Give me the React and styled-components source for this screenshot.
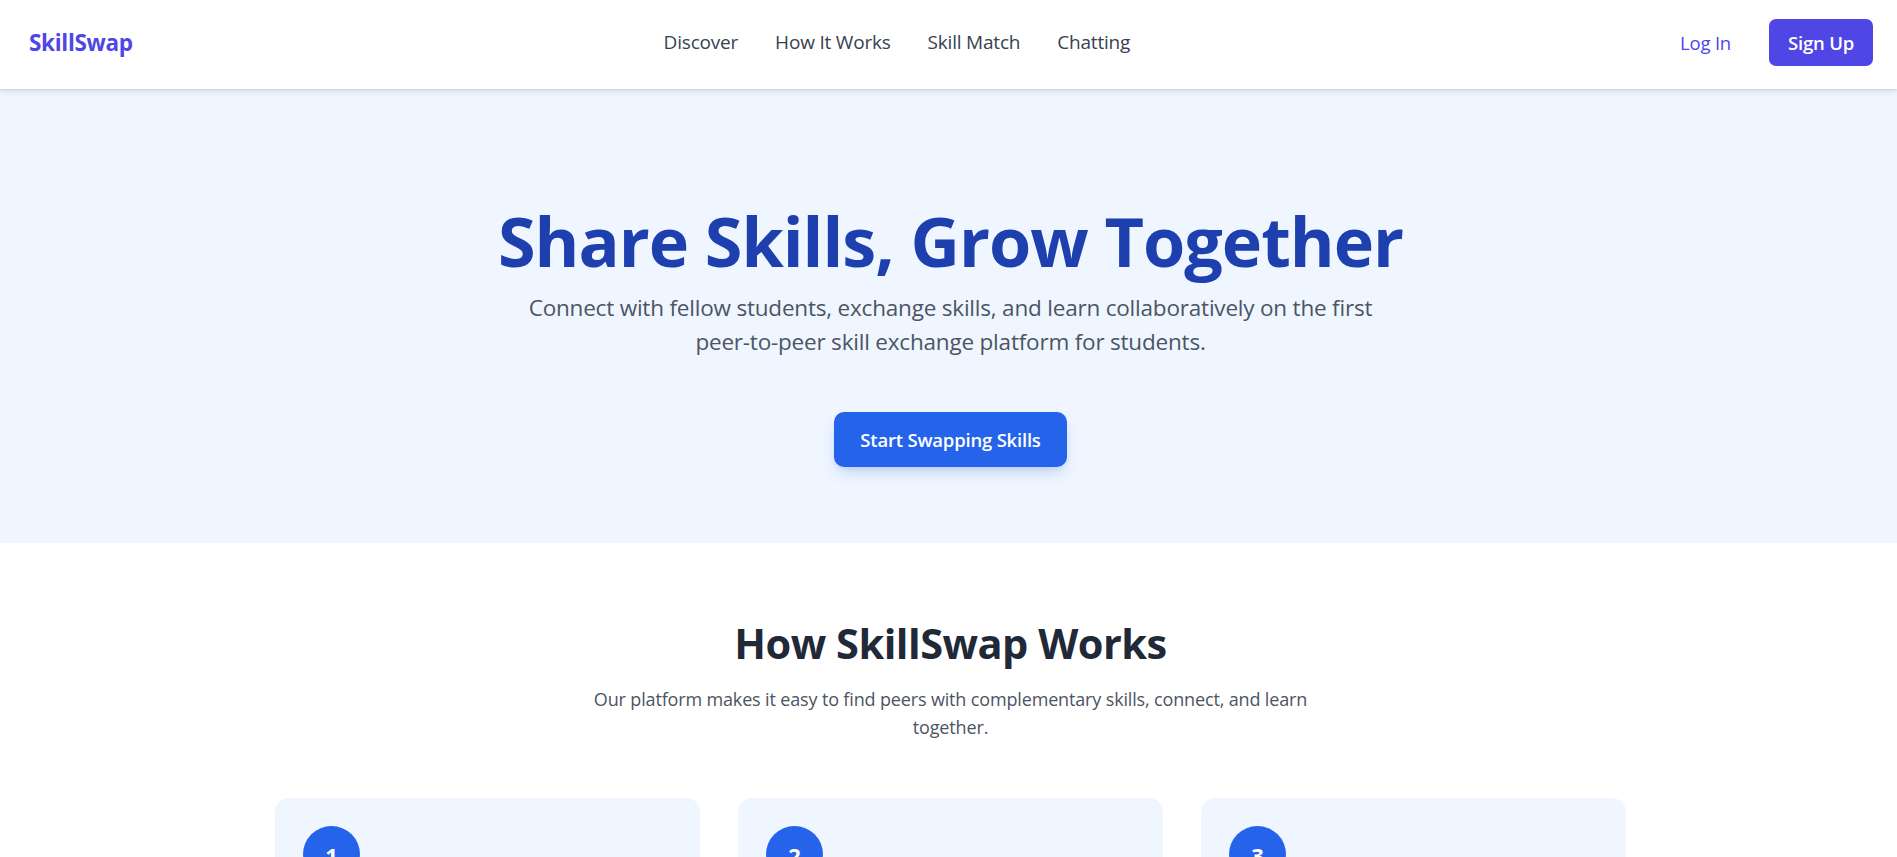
import React from "react";
import styled, { createGlobalStyle } from "styled-components";

const GlobalStyle = createGlobalStyle`
  html {
    scrollbar-width: none;
  }
  html::-webkit-scrollbar {
    display: none;
  }
  body {
    margin: 0;
    font-family: "Open Sans", "Noto Sans", sans-serif;
    color: #1f2937;
    background: #ffffff;
  }
  * {
    box-sizing: border-box;
  }
`;

const Header = styled.header`
  position: relative;
  z-index: 2;
  height: 89px;
  padding: 0 24px 5px 29px;
  display: flex;
  align-items: center;
  justify-content: space-between;
  background: #ffffff;
  box-shadow: 0 2px 6px rgba(15, 23, 42, 0.12), 0 1px 2px rgba(15, 23, 42, 0.06);
`;

const Logo = styled.a`
  font-size: 22.5px;
  font-weight: 700;
  color: #4f46e5;
  text-decoration: none;
  letter-spacing: -0.3px;
`;

const Nav = styled.nav`
  display: flex;
  gap: 37px;
`;

const NavLink = styled.a`
  font-size: 19px;
  font-weight: 500;
  color: #374151;
  text-decoration: none;
  letter-spacing: -0.2px;
`;

const Actions = styled.div`
  display: flex;
  align-items: center;
  gap: 19px;
`;

const Button = styled.button`
  font-family: inherit;
  border: none;
  cursor: pointer;
  font-size: 18.5px;
  font-weight: ${(p) => (p.$variant === "ghost" ? 500 : 600)};
  color: ${(p) => (p.$variant === "ghost" ? "#4f46e5" : "#ffffff")};
  background: ${(p) =>
    p.$variant === "ghost" ? "transparent" : p.$variant === "blue" ? "#2563eb" : "#4f46e5"};
  border-radius: ${(p) => (p.$size === "lg" ? "10px" : "7px")};
  height: ${(p) => (p.$size === "lg" ? "55px" : "47px")};
  padding: ${(p) => (p.$size === "lg" ? "0 26px" : "0 19px")};
  box-shadow: ${(p) =>
    p.$size === "lg"
      ? "0 8px 16px -4px rgba(37, 99, 235, 0.25), 0 4px 8px -4px rgba(15,23,42,0.1)"
      : "none"};
  letter-spacing: -0.2px;
`;

const Hero = styled.section`
  background: #eff6ff;
  padding: 114px 22px 76px 26px;
  display: flex;
  flex-direction: column;
  align-items: center;
  text-align: center;
`;

const HeroTitle = styled.h1`
  margin: 0;
  font-size: 68.3px;
  line-height: 1.1;
  font-weight: 700;
  color: #1e40af;
  letter-spacing: -1px;
`;

const HeroText = styled.p`
  margin: 13px 0 0;
  max-width: 870px;
  font-size: 22.5px;
  line-height: 34px;
  color: #4b5563;
  letter-spacing: -0.2px;
`;

const HeroAction = styled.div`
  margin-top: 53px;
`;

const Works = styled.section`
  padding: 76px 22px 80px 26px;
  display: flex;
  flex-direction: column;
  align-items: center;
  text-align: center;
`;

const SectionTitle = styled.h2`
  margin: 0;
  font-size: 41.5px;
  line-height: 48px;
  font-weight: 700;
  color: #1f2937;
  letter-spacing: -0.5px;
`;

const SectionText = styled.p`
  margin: 18px 0 0;
  max-width: 760px;
  font-size: 18px;
  line-height: 28px;
  color: #4b5563;
  letter-spacing: -0.15px;
`;

const Steps = styled.div`
  margin-top: 57px;
  width: 100%;
  max-width: 1351px;
  display: grid;
  grid-template-columns: repeat(3, 1fr);
  gap: 38px;
  text-align: left;
`;

const StepCard = styled.div`
  background: #eff6ff;
  border-radius: 14px;
  padding: 28px;
`;

const StepNumber = styled.div`
  width: 57px;
  height: 57px;
  border-radius: 50%;
  background: #2563eb;
  color: #ffffff;
  display: flex;
  align-items: center;
  justify-content: center;
  font-size: 22px;
  font-weight: 700;
`;

const StepTitle = styled.h3`
  margin: 19px 0 10px;
  font-size: 22px;
  font-weight: 600;
  color: #1f2937;
`;

const StepText = styled.p`
  margin: 0;
  font-size: 17px;
  line-height: 27px;
  color: #4b5563;
`;

const STEPS = [
  {
    title: "Create Your Profile",
    text: "List the skills you can teach and the ones you want to learn.",
  },
  {
    title: "Find Your Match",
    text: "Our matching finds students with complementary skills.",
  },
  {
    title: "Swap & Grow",
    text: "Chat, schedule sessions and learn from each other.",
  },
];

export default function App() {
  return (
    <>
      <GlobalStyle />
      <Header>
        <Logo href="#">SkillSwap</Logo>
        <Nav>
          <NavLink href="#">Discover</NavLink>
          <NavLink href="#">How It Works</NavLink>
          <NavLink href="#">Skill Match</NavLink>
          <NavLink href="#">Chatting</NavLink>
        </Nav>
        <Actions>
          <Button $variant="ghost">Log In</Button>
          <Button>Sign Up</Button>
        </Actions>
      </Header>

      <Hero>
        <HeroTitle>Share Skills, Grow Together</HeroTitle>
        <HeroText>
          Connect with fellow students, exchange skills, and learn collaboratively on the first
          peer-to-peer skill exchange platform for students.
        </HeroText>
        <HeroAction>
          <Button $variant="blue" $size="lg">
            Start Swapping Skills
          </Button>
        </HeroAction>
      </Hero>

      <Works>
        <SectionTitle>How SkillSwap Works</SectionTitle>
        <SectionText>
          Our platform makes it easy to find peers with complementary skills, connect, and learn
          together.
        </SectionText>
        <Steps>
          {STEPS.map((step, i) => (
            <StepCard key={step.title}>
              <StepNumber>{i + 1}</StepNumber>
              <StepTitle>{step.title}</StepTitle>
              <StepText>{step.text}</StepText>
            </StepCard>
          ))}
        </Steps>
      </Works>
    </>
  );
}
